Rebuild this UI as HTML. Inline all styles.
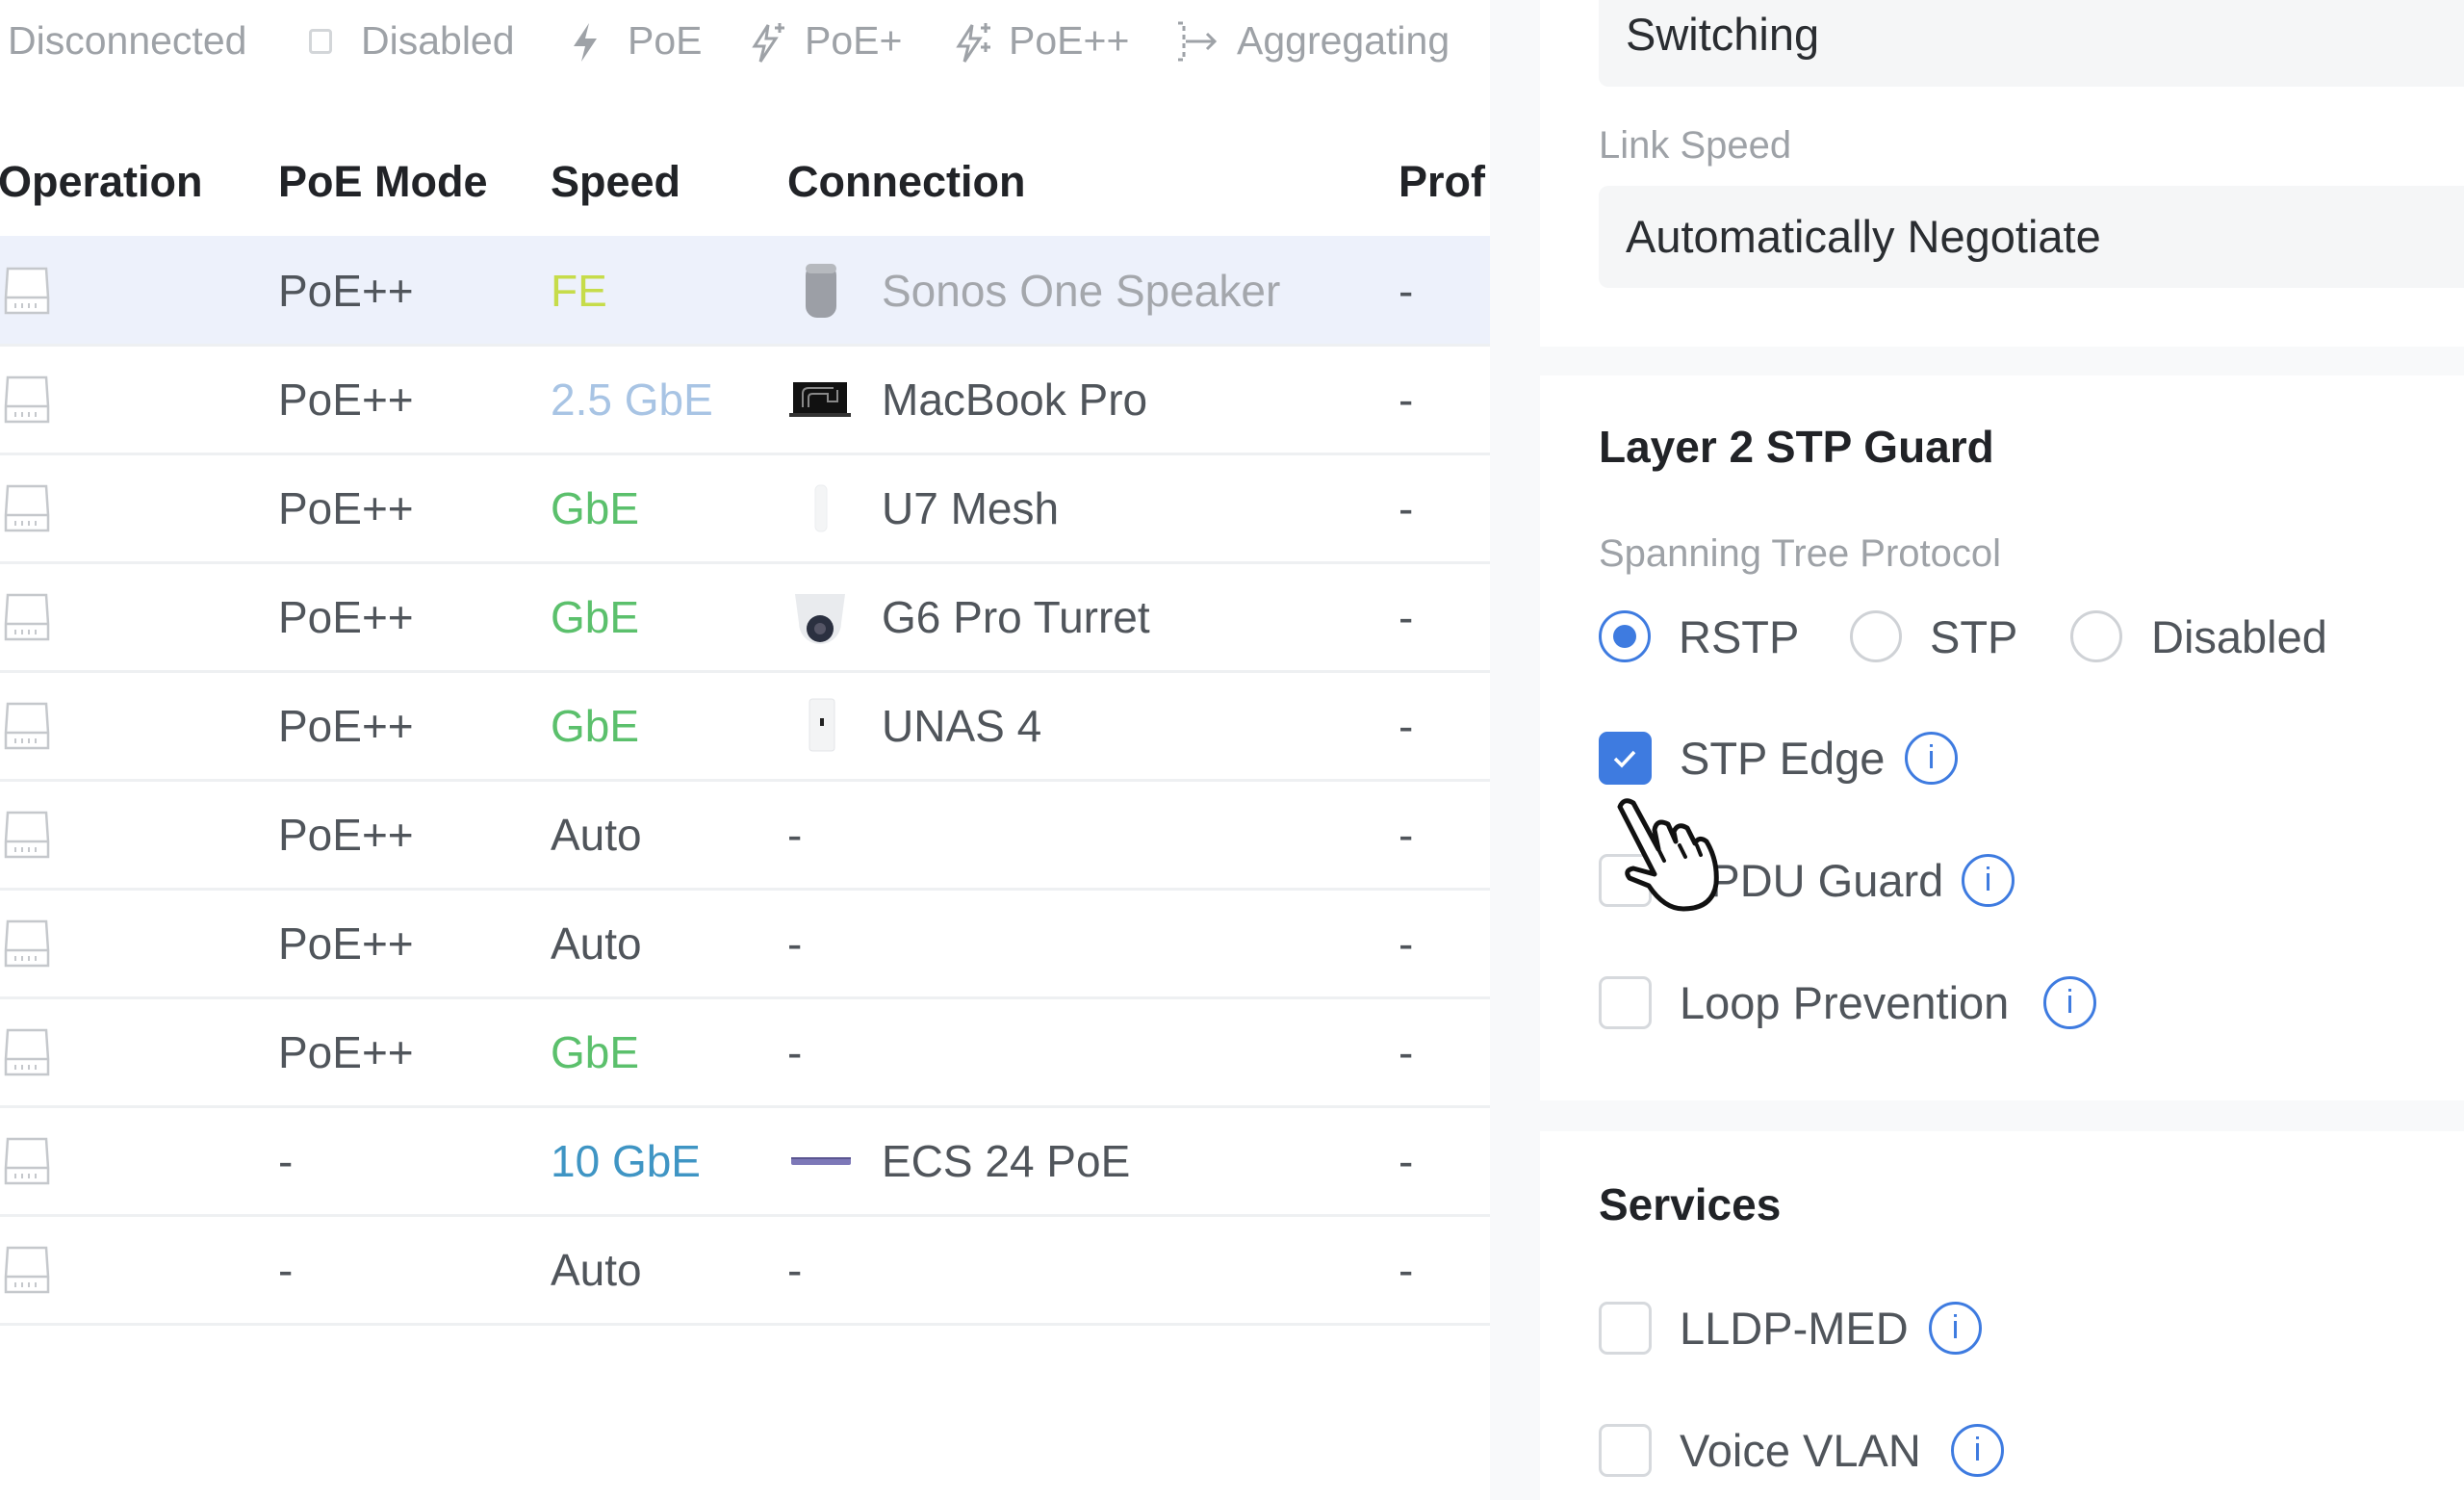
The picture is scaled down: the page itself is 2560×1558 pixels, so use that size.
<!DOCTYPE html>
<html><head><meta charset="utf-8"><style>
*{margin:0;padding:0;box-sizing:border-box}
body{width:2560px;height:1558px;overflow:hidden;background:#fff;font-family:"Liberation Sans",sans-serif;position:relative;color:#50555b}
.a{position:absolute;white-space:nowrap}
.lg{font-size:41px;color:#9ea2a7;top:19px}
.hd{font-size:45px;font-weight:bold;color:#212327;top:163px}
.t{font-size:46px;line-height:52px}
.line{position:absolute;left:0;width:1548px;height:3px;background:#eef0f2}
.rb{position:absolute;width:54px;height:54px;border-radius:50%;border:3px solid #cfd2d6;background:#fff}
.cb{position:absolute;width:55px;height:55px;border-radius:9px;border:3px solid #d6d9dd;background:#fff}
.inf{position:absolute;width:55px;height:55px;border-radius:50%;border:3px solid #3e7be0;color:#3e7be0;font-size:34px;text-align:center;line-height:49px;font-family:"Liberation Sans",sans-serif}
.rt{font-size:47px;color:#50555b}
</style></head><body>
<div class="a" style="left:1548px;top:0;width:52px;height:1558px;background:#f8f9fa"></div>
<div class="a" style="left:1600px;top:360px;width:960px;height:30px;background:#f8f9fa"></div>
<div class="a" style="left:1600px;top:1143px;width:960px;height:32px;background:#f8f9fa"></div>

<div class="a lg" style="left:8px">Disconnected</div>
<div class="a" style="left:321px;top:30px;width:24px;height:26px;border:3px solid #d3d6d9;border-radius:4px"></div>
<div class="a lg" style="left:375px">Disabled</div>
<svg class="a" style="left:590px;top:22px" width="36" height="44" viewBox="0 0 36 44"><path d="M22 2 L6 26 H18 L14 42 L30 18 H18 Z" fill="#9ea2a7"/></svg>
<div class="a lg" style="left:652px">PoE</div>
<svg class="a" style="left:778px;top:22px" width="40" height="44" viewBox="0 0 40 44"><path d="M20 4 L6 26 H16 L12 42 L28 18 H18 Z" fill="none" stroke="#9ea2a7" stroke-width="3"/><path d="M32 2 v10 M27 7 h10" stroke="#9ea2a7" stroke-width="3"/></svg>
<div class="a lg" style="left:836px">PoE+</div>
<svg class="a" style="left:990px;top:22px" width="44" height="44" viewBox="0 0 44 44"><path d="M20 4 L6 26 H16 L12 42 L28 18 H18 Z" fill="none" stroke="#9ea2a7" stroke-width="3"/><path d="M34 2 v10 M29 7 h10 M34 22 v10 M29 27 h10" stroke="#9ea2a7" stroke-width="3"/></svg>
<div class="a lg" style="left:1048px">PoE++</div>
<svg class="a" style="left:1220px;top:20px" width="52" height="46" viewBox="0 0 52 46"><path d="M4 4 h6 v38 h-6" fill="none" stroke="#9ea2a7" stroke-width="3" stroke-dasharray="5 4"/><path d="M12 23 h30 M34 15 l8 8 -8 8" fill="none" stroke="#9ea2a7" stroke-width="3"/></svg>
<div class="a lg" style="left:1285px">Aggregating</div>

<div class="a hd" style="left:-2px">Operation</div>
<div class="a hd" style="left:289px">PoE Mode</div>
<div class="a hd" style="left:572px">Speed</div>
<div class="a hd" style="left:818px">Connection</div>
<div class="a hd" style="left:1453px">Prof</div>

<div class="a" style="left:0;top:245px;width:1548px;height:113px;background:#edf1fb"></div>

<div id="rows"></div>
<script>
var rows=[
["PoE++","FE","#c6dc4a","sonos","Sonos One Speaker","#a4a7ac"],
["PoE++","2.5 GbE","#a8c4e4","mac","MacBook Pro",""],
["PoE++","GbE","#5bc06c","u7","U7 Mesh",""],
["PoE++","GbE","#5bc06c","cam","G6 Pro Turret",""],
["PoE++","GbE","#5bc06c","unas","UNAS 4",""],
["PoE++","Auto","","","-",""],
["PoE++","Auto","","","-",""],
["PoE++","GbE","#5bc06c","","-",""],
["-","10 GbE","#3f95c4","ecs","ECS 24 PoE",""],
["-","Auto","","","-",""]];
var icons={
sonos:'<svg width="40" height="60"><rect x="4" y="2" width="32" height="56" rx="12" fill="#9c9fa6"/><rect x="4" y="2" width="32" height="10" rx="5" fill="#b6b9be"/></svg>',
mac:'<svg width="66" height="40"><rect x="4" y="2" width="56" height="32" fill="#111"/><path d="M14 28 v-14 q0-6 6-6 h26 M20 28 v-10 q0-4 4-4 h16 v8 h10 v-12" fill="none" stroke="#888" stroke-width="2"/><rect x="0" y="34" width="64" height="4" fill="#333"/></svg>',
u7:'<svg width="40" height="60"><rect x="14" y="6" width="12" height="48" rx="5" fill="#f4f5f6" stroke="#eceef0"/></svg>',
cam:'<svg width="66" height="60"><path d="M6 6 h52 l-4 30 a22 22 0 0 1-44 0z" fill="#e9ebee"/><circle cx="32" cy="42" r="14" fill="#2b3040"/><circle cx="32" cy="42" r="6" fill="#556"/></svg>',
unas:'<svg width="40" height="60"><rect x="8" y="2" width="26" height="54" rx="3" fill="#f3f4f5" stroke="#e3e5e8"/><rect x="19" y="22" width="4" height="8" fill="#222"/></svg>',
ecs:'<svg width="66" height="20"><rect x="2" y="6" width="62" height="8" rx="2" fill="#7d78b8"/><rect x="2" y="6" width="62" height="2" fill="#5a5590"/></svg>'};
var h='';
rows.forEach(function(r,i){
 var c=302+113*i, top=c-26;
 h+='<svg class="a" style="left:2px;top:'+(c-27)+'px" width="52" height="54" viewBox="0 0 52 54"><path d="M6 4 h40 l2 30 v16 h-44 v-16 z" fill="#fff" stroke="#c5c8cc" stroke-width="2.5"/><path d="M4 34 h44" stroke="#c5c8cc" stroke-width="2.5"/><path d="M14 40v5M21 40v5M28 40v5M35 40v5" stroke="#c5c8cc" stroke-width="2"/></svg>';
 h+='<div class="a t" style="left:289px;top:'+top+'px">'+r[0]+'</div>';
 h+='<div class="a t" style="left:572px;top:'+top+'px;color:'+(r[2]||'#50555b')+'">'+r[1]+'</div>';
 if(r[3]){h+='<div class="a" style="left:818px;top:'+(c-30)+'px;width:70px;height:60px;display:flex;align-items:center;justify-content:center">'+icons[r[3]]+'</div>';
  h+='<div class="a t" style="left:916px;top:'+top+'px;color:'+(r[5]||'#50555b')+'">'+r[4]+'</div>';}
 else h+='<div class="a t" style="left:818px;top:'+top+'px">-</div>';
 h+='<div class="a t" style="left:1453px;top:'+top+'px">-</div>';
 h+='<div class="line" style="top:'+(c+55)+'px"></div>';
});
document.getElementById('rows').innerHTML=h;
</script>

<div class="a" style="left:1661px;top:-10px;width:920px;height:100px;background:#f5f6f7;border-radius:10px"></div>
<div class="a rt" style="left:1689px;top:8px;color:#2a2d31">Switching</div>
<div class="a" style="left:1661px;top:129px;font-size:40px;color:#9ea2a7">Link Speed</div>
<div class="a" style="left:1661px;top:193px;width:920px;height:106px;background:#f5f6f7;border-radius:10px"></div>
<div class="a rt" style="left:1689px;top:218px;color:#2a2d31">Automatically Negotiate</div>

<div class="a" style="left:1661px;top:437px;font-size:46px;font-weight:bold;color:#212327">Layer 2 STP Guard</div>
<div class="a" style="left:1661px;top:553px;font-size:40px;color:#9ea2a7">Spanning Tree Protocol</div>

<div class="rb" style="left:1661px;top:634px;border-color:#3e7be0"><div style="position:absolute;left:12px;top:12px;width:24px;height:24px;border-radius:50%;background:#3e7be0"></div></div>
<div class="a rt" style="left:1744px;top:634px">RSTP</div>
<div class="rb" style="left:1922px;top:634px"></div>
<div class="a rt" style="left:2005px;top:634px">STP</div>
<div class="rb" style="left:2151px;top:634px"></div>
<div class="a rt" style="left:2235px;top:634px">Disabled</div>

<div class="cb" style="left:1661px;top:760px;background:#3e7be0;border-color:#3e7be0"><svg width="49" height="49" viewBox="0 0 49 49"><path d="M14 25 l7 7 l13 -14" fill="none" stroke="#fff" stroke-width="3.5"/></svg></div>
<div class="a rt" style="left:1745px;top:760px">STP Edge</div>
<div class="inf" style="left:1979px;top:760px">i</div>

<div class="cb" style="left:1661px;top:887px"></div>
<div class="a rt" style="left:1745px;top:887px">BPDU Guard</div>
<div class="inf" style="left:2038px;top:887px">i</div>

<div class="cb" style="left:1661px;top:1014px"></div>
<div class="a rt" style="left:1745px;top:1014px">Loop Prevention</div>
<div class="inf" style="left:2123px;top:1014px">i</div>

<!-- hand cursor -->
<svg class="a" style="left:1675px;top:828px" width="130" height="120" viewBox="0 0 130 120">
<path d="M8 10 q4 -10 14 -4 l26 48 l-4 -20 q2 -12 14 -6 l8 18 l-2 -10 q4 -10 14 -4 l8 16 q4 -8 12 -2 q12 20 10 44 q-4 26 -34 26 q-20 0 -36 -24 l-20 -8 q-6 -8 4 -10 l22 6 z" fill="#fff" stroke="#111" stroke-width="5" stroke-linejoin="round"/>
<path d="M48 54 l6 12 M70 50 l6 12 M88 50 l4 10" stroke="#111" stroke-width="4" stroke-linecap="round"/>
</svg>

<div class="a" style="left:1661px;top:1224px;font-size:46px;font-weight:bold;color:#212327">Services</div>
<div class="cb" style="left:1661px;top:1352px"></div>
<div class="a rt" style="left:1745px;top:1352px">LLDP-MED</div>
<div class="inf" style="left:2004px;top:1352px">i</div>
<div class="cb" style="left:1661px;top:1479px"></div>
<div class="a rt" style="left:1745px;top:1479px">Voice VLAN</div>
<div class="inf" style="left:2027px;top:1479px">i</div>
</body></html>
